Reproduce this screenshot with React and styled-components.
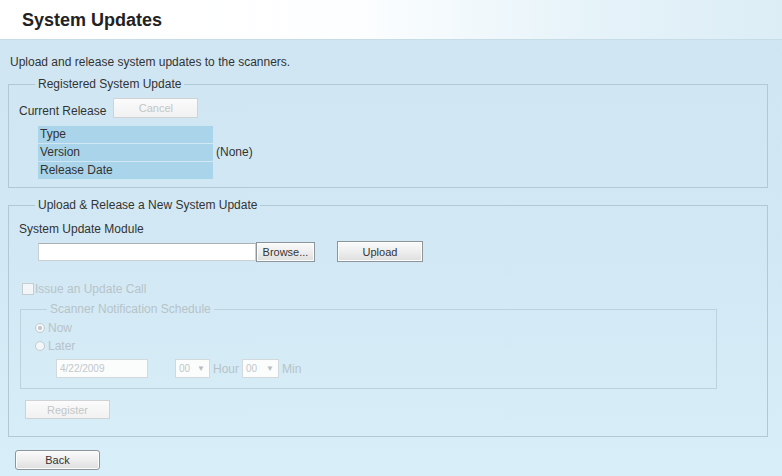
import React from 'react';
import styled, { createGlobalStyle } from 'styled-components';

const Global = createGlobalStyle`
  html, body { margin: 0; padding: 0; }
  body {
    font-family: "Liberation Sans", Arial, sans-serif;
    font-size: 12px;
    color: #333;
  }
`;

const Page = styled.div`
  width: 782px;
  height: 476px;
  overflow: hidden;
  display: flex;
  flex-direction: column;
  background: linear-gradient(180deg, #cfe6f2 0%, #d2e9f5 55%, #d8eef8 100%);
`;

const Header = styled.header`
  height: 40px;
  flex-shrink: 0;
  display: flex;
  align-items: center;
  padding: 2px 0 0 22px;
  box-sizing: border-box;
  background: linear-gradient(90deg, #ffffff 0%, #fdfeff 45%, #e6f3f9 75%, #dcedf6 100%);
  border-bottom: 1px solid #c6dde8;
`;

const Title = styled.h1`
  margin: 0;
  font-size: 18px;
  font-weight: bold;
  color: #222;
`;

const Body = styled.main`
  flex: 1;
  padding: 14px 14px 0 8px;
`;

const Intro = styled.p`
  margin: 0 0 0 2px;
  line-height: 16px;
`;

const Group = styled.fieldset`
  margin: ${p => p.$top || 0}px ${p => p.$right || 0}px 0 ${p => p.$left || 0}px;
  padding: ${p => p.$pad || '0 0 0 10px'};
  border: 1px solid ${p => (p.$muted ? '#bcd2dc' : '#b0c9d4')};
  min-width: 0;
`;

const Legend = styled.legend`
  margin-left: ${p => p.$indent || 16}px;
  padding: 0 3px;
  line-height: 14px;
  color: ${p => (p.$disabled ? '#b7c3c8' : '#333')};
`;

const ReleaseRow = styled.div`
  display: flex;
  align-items: flex-end;
  gap: 7px;
  margin-top: 7px;
`;

const Label = styled.span`
  line-height: 14px;
  color: ${p => (p.$disabled ? '#b7c3c8' : '#333')};
`;

const Button = styled.button`
  font-family: inherit;
  font-size: 11px;
  width: ${p => p.$w}px;
  height: ${p => p.$h || 20}px;
  padding: 0;
  box-sizing: border-box;
  border: 1px solid ${p => (p.disabled ? '#cfd3d5' : '#8e9598')};
  border-radius: ${p => p.$round || 0}px;
  color: ${p => (p.disabled ? '#c2c6c8' : '#333')};
  background: ${p =>
    p.disabled
      ? 'linear-gradient(180deg, #fbfbfb 0%, #f1f1f1 100%)'
      : 'linear-gradient(180deg, #fafafa 0%, #eeeeee 50%, #dedede 100%)'};
  box-shadow: ${p => (p.disabled ? 'none' : 'inset 0 0 0 1px #fcfcfc')};
  flex-shrink: 0;
`;

const InfoTable = styled.table`
  margin: 7px 0 0 19px;
  border-collapse: separate;
  border-spacing: 0 1px;
`;

const InfoCell = styled.td`
  width: 175px;
  height: 17px;
  padding: 0 0 0 2px;
  box-sizing: border-box;
  background: #a9d4ea;
  line-height: 17px;
`;

const ValueCell = styled.td`
  padding: 0 0 0 3px;
  line-height: 17px;
`;

const GroupEnd = styled.div`
  height: ${p => p.$h}px;
`;

const Stack = styled.div`
  margin-top: ${p => p.$top || 0}px;
  margin-left: ${p => p.$left || 0}px;
  display: flex;
  align-items: center;
  gap: ${p => p.$gap || 0}px;
`;

const FileField = styled.div`
  width: 218px;
  height: 18px;
  box-sizing: border-box;
  background: #fff;
  border: 1px solid #c8d0d4;
  border-top-color: #a8b0b4;
`;

const Check = styled.span`
  width: 10px;
  height: 10px;
  margin: 0 1px 0 3px;
  border: 1px solid #c4cdd1;
  background: #f2f6f8;
`;

const Radio = styled.span`
  width: 8px;
  height: 8px;
  border-radius: 50%;
  border: 1px solid #c2cbcf;
  background: #f3f6f7;
  display: flex;
  align-items: center;
  justify-content: center;
  margin-right: 3px;
  &::after {
    content: '';
    width: 4px;
    height: 4px;
    border-radius: 50%;
    background: ${p => (p.$on ? '#bcc5c9' : 'transparent')};
  }
`;

const OptionRow = styled.div`
  display: flex;
  align-items: center;
  height: 18px;
`;

const DisabledBox = styled.div`
  width: ${p => p.$w}px;
  height: 19px;
  box-sizing: border-box;
  display: flex;
  align-items: center;
  justify-content: space-between;
  padding: 0 4px 0 3px;
  background: #fbfcfc;
  border: 1px solid #d2d8db;
  font-size: 10px;
  color: #c2c8cb;
`;

const Arrow = styled.span`
  font-size: 8px;
  color: #b8bfc2;
`;

export default function App() {
  return (
    <Page>
      <Global />
      <Header>
        <Title>System Updates</Title>
      </Header>
      <Body>
        <Intro>Upload and release system updates to the scanners.</Intro>

        <Group $top={7}>
          <Legend>Registered System Update</Legend>
          <ReleaseRow>
            <Label>Current Release</Label>
            <Button $w={85} disabled>Cancel</Button>
          </ReleaseRow>
          <InfoTable>
            <tbody>
              <tr><InfoCell>Type</InfoCell><ValueCell /></tr>
              <tr><InfoCell>Version</InfoCell><ValueCell>(None)</ValueCell></tr>
              <tr><InfoCell>Release Date</InfoCell><ValueCell /></tr>
            </tbody>
          </InfoTable>
          <GroupEnd $h={7} />
        </Group>

        <Group $top={10}>
          <Legend>Upload &amp; Release a New System Update</Legend>
          <Stack $top={10}><Label>System Update Module</Label></Stack>
          <Stack $top={5} $left={19}>
            <FileField />
            <Button $w={59} $h={20}>Browse...</Button>
            <Stack $left={22}>
              <Button $w={86} $h={21}>Upload</Button>
            </Stack>
          </Stack>

          <Stack $top={20}>
            <Check />
            <Label $disabled>Issue an Update Call</Label>
          </Stack>

          <Group $top={6} $left={1} $right={50} $pad="3px 0 10px 14px" $muted>
            <Legend $indent={12} $disabled>Scanner Notification Schedule</Legend>
            <OptionRow>
              <Radio $on />
              <Label $disabled>Now</Label>
            </OptionRow>
            <OptionRow>
              <Radio />
              <Label $disabled>Later</Label>
            </OptionRow>
            <Stack $top={4} $left={21}>
              <DisabledBox $w={92}>4/22/2009</DisabledBox>
              <Stack $left={27} $gap={3}>
                <DisabledBox $w={35}>00<Arrow>▼</Arrow></DisabledBox>
                <Label $disabled>Hour</Label>
                <DisabledBox $w={37}>00<Arrow>▼</Arrow></DisabledBox>
                <Label $disabled>Min</Label>
              </Stack>
            </Stack>
          </Group>

          <Stack $top={11} $left={6}>
            <Button $w={85} $h={19} disabled>Register</Button>
          </Stack>
          <GroupEnd $h={17} />
        </Group>

        <Stack $top={13} $left={7}>
          <Button $w={85} $h={20} $round={3}>Back</Button>
        </Stack>
      </Body>
    </Page>
  );
}
